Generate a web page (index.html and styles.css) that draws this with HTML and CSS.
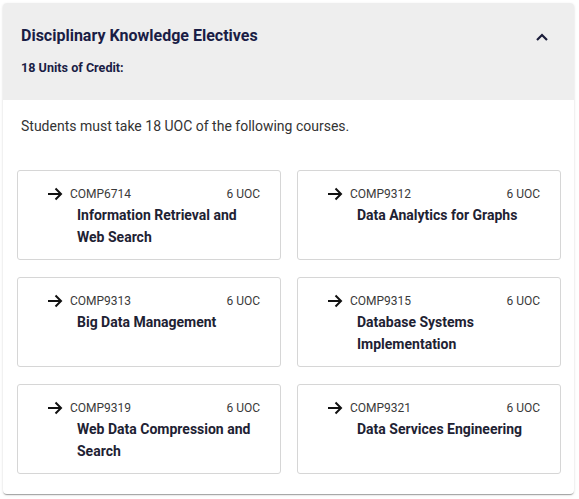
FILE: index.html
```html
<!DOCTYPE html>
<html>
<head>
<meta charset="utf-8">
<link rel="stylesheet" href="styles.css">
</head>
<body>
<div class="panel">
  <div class="panel-head">
    <div class="head-row">
      <h2 class="title">Disciplinary Knowledge Electives</h2>
      <svg class="chevron" width="14" height="10" viewBox="0 0 14 10"><path d="M2 8 L7 3 L12 8" fill="none" stroke="#1b1d3a" stroke-width="2.2"/></svg>
    </div>
    <div class="subtitle">18 Units of Credit:</div>
  </div>
  <div class="panel-body">
    <p class="intro">Students must take 18 UOC of the following courses.</p>
    <div class="grid">
      <div class="card">
        <div class="card-top"><svg class="arrow" width="16" height="14" viewBox="0 0 16 14"><path d="M1 7 H14 M8.5 1.5 L14 7 L8.5 12.5" fill="none" stroke="#111" stroke-width="2"/></svg><span class="code">COMP6714</span><span class="uoc">6 UOC</span></div>
        <div class="name">Information Retrieval and Web Search</div>
      </div>
      <div class="card">
        <div class="card-top"><svg class="arrow" width="16" height="14" viewBox="0 0 16 14"><path d="M1 7 H14 M8.5 1.5 L14 7 L8.5 12.5" fill="none" stroke="#111" stroke-width="2"/></svg><span class="code">COMP9312</span><span class="uoc">6 UOC</span></div>
        <div class="name">Data Analytics for Graphs</div>
      </div>
      <div class="card">
        <div class="card-top"><svg class="arrow" width="16" height="14" viewBox="0 0 16 14"><path d="M1 7 H14 M8.5 1.5 L14 7 L8.5 12.5" fill="none" stroke="#111" stroke-width="2"/></svg><span class="code">COMP9313</span><span class="uoc">6 UOC</span></div>
        <div class="name">Big Data Management</div>
      </div>
      <div class="card">
        <div class="card-top"><svg class="arrow" width="16" height="14" viewBox="0 0 16 14"><path d="M1 7 H14 M8.5 1.5 L14 7 L8.5 12.5" fill="none" stroke="#111" stroke-width="2"/></svg><span class="code">COMP9315</span><span class="uoc">6 UOC</span></div>
        <div class="name">Database Systems Implementation</div>
      </div>
      <div class="card">
        <div class="card-top"><svg class="arrow" width="16" height="14" viewBox="0 0 16 14"><path d="M1 7 H14 M8.5 1.5 L14 7 L8.5 12.5" fill="none" stroke="#111" stroke-width="2"/></svg><span class="code">COMP9319</span><span class="uoc">6 UOC</span></div>
        <div class="name">Web Data Compression and Search</div>
      </div>
      <div class="card">
        <div class="card-top"><svg class="arrow" width="16" height="14" viewBox="0 0 16 14"><path d="M1 7 H14 M8.5 1.5 L14 7 L8.5 12.5" fill="none" stroke="#111" stroke-width="2"/></svg><span class="code">COMP9321</span><span class="uoc">6 UOC</span></div>
        <div class="name">Data Services Engineering</div>
      </div>
    </div>
  </div>
</div>
</body>
</html>
```
FILE: styles.css
```css
* { box-sizing: border-box; }
body {
  margin: 0;
  background: #fff;
  font-family: Roboto, "Liberation Sans", sans-serif;
}
.panel {
  margin: 3px 5px 5px 3px;
  width: 571px;
  height: 491px;
  border-radius: 4px;
  overflow: hidden;
  background: #fff;
  box-shadow: 0 2px 1px -1px rgba(0,0,0,.2), 0 1px 1px 0 rgba(0,0,0,.14), 0 1px 3px 0 rgba(0,0,0,.12);
}
.panel-head {
  background: #eeeeee;
  height: 97px;
  padding: 21px 25px 0 18px;
}
.head-row {
  display: flex;
  align-items: center;
  justify-content: space-between;
  height: 24px;
}
.title {
  margin: 0;
  font-size: 16px;
  font-weight: 700;
  line-height: 24px;
  color: #1a1d45;
}
.chevron { flex: none; margin-top: 1px; }
.subtitle {
  margin-top: 11px;
  font-size: 12.6px;
  font-weight: 700;
  line-height: 18px;
  color: #1a1d45;
}
.panel-body {
  padding: 16px 13px 0 14px;
}
.intro {
  margin: 0 0 34px 4px;
  font-size: 14px;
  line-height: 20px;
  color: #333;
}
.grid {
  display: grid;
  grid-template-columns: 1fr 1fr;
  column-gap: 16px;
  row-gap: 17px;
}
.card {
  border: 1px solid #d6d6d6;
  border-radius: 3px;
  padding: 13px 20px 11px 29px;
  min-height: 90px;
}
.card-top {
  display: flex;
  align-items: center;
  height: 20px;
}
.arrow { flex: none; margin-right: 7px; }
.code {
  font-size: 12px;
  color: #3a3a3a;
}
.uoc {
  margin-left: auto;
  font-size: 12px;
  color: #3a3a3a;
}
.name {
  padding-left: 30px;
  font-size: 14px;
  font-weight: 700;
  line-height: 22px;
  color: #1e2233;
}
```
